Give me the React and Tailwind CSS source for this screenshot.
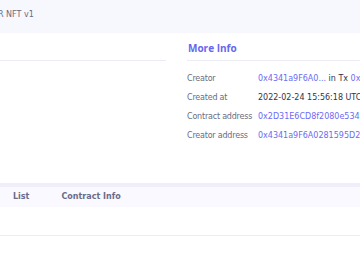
export default function App() {
  const rows = [
    {
      label: "Creator",
      value: (
        <>
          <span className="text-[#6b6bf2]">0x4341a9F6A0...</span>
          <span className="text-[#333344]"> in Tx </span>
          <span className="text-[#6b6bf2]">0x7b1e9a3c2d</span>
        </>
      ),
    },
    {
      label: "Created at",
      value: <span className="text-[#333344]">2022-02-24 15:56:18 UTC+08:00</span>,
    },
    {
      label: "Contract address",
      value: <span className="text-[#6b6bf2]">0x2D31E6CD8f2080e534EBd1c2</span>,
    },
    {
      label: "Creator address",
      value: <span className="text-[#6b6bf2]">0x4341a9F6A0281595D20b7c1</span>,
    },
  ];
  return (
    <div className="w-[360px] h-[270px] overflow-hidden bg-[#f7f7fe] font-['DejaVu_Sans',sans-serif]">
      <div className="h-[33px] flex items-center text-[8px] text-[#6b6b80] ml-[-2px] pb-[3px]">R NFT v1</div>
      <div className="flex gap-[6px] h-[150px] bg-white">
        <div className="w-[172px] shrink-0 bg-white pr-[6px]">
          <div className="h-[28px] border-b border-[#ececf4]"></div>
        </div>
        <div className="flex-1 bg-white pl-[9px] min-w-0">
          <div className="h-[28px] flex items-center pt-[4px] pl-[1px] border-b border-[#ececf4] text-[10px] font-bold text-[#6666f0] font-['Open_Sans',sans-serif]">
            More Info
          </div>
          <div className="pt-[8px] text-[8px]">
            {rows.map((r) => (
              <div key={r.label} className="h-[19px] flex items-center whitespace-nowrap">
                <div className="w-[71px] shrink-0 text-[#6b6b80] tracking-[-0.2px]">{r.label}</div>
                <div>{r.value}</div>
              </div>
            ))}
          </div>
        </div>
      </div>
      <div className="h-[4px] bg-[#efeffc]"></div>
      <div className="h-[20px] bg-[#f9f9ff] flex items-center text-[8px] font-bold text-[#6b6b8a]">
        <div className="ml-[13px]">List</div>
        <div className="ml-[32px]">Contract Info</div>
      </div>
      <div className="bg-white h-[70px]">
        <div className="h-[29px] border-b border-[#ececf4]"></div>
      </div>
    </div>
  );
}
